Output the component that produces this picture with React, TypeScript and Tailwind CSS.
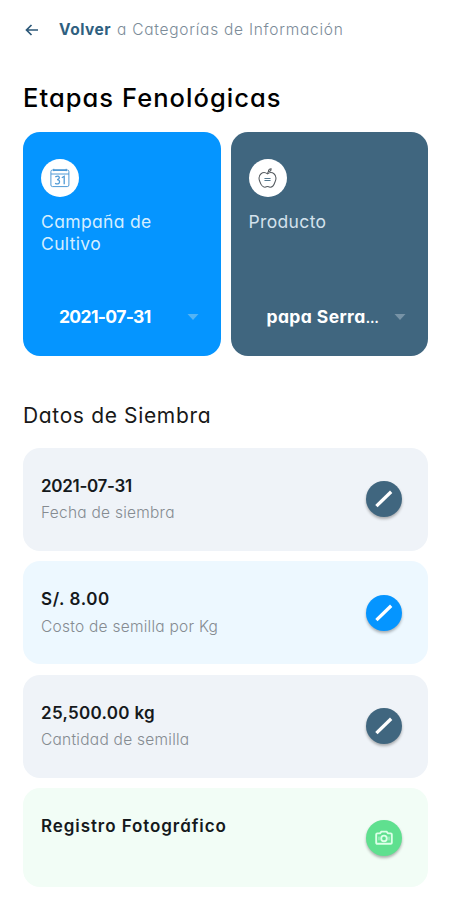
import type { ReactNode } from "react";

const PencilIcon = () => (
  <svg width="20" height="20" viewBox="0 0 20 20" fill="none">
    <path d="M3.6 16L16 3.9" stroke="#fff" strokeWidth="3.3" strokeLinecap="square" />
  </svg>
);

const CameraIcon = () => (
  <svg width="18" height="16" viewBox="0 0 18 16" fill="none" stroke="#dcffe8" strokeWidth="1.9">
    <path d="M2.3 3.4H5L6.4 1.6H11.6L13 3.4H15.7Q16.8 3.4 16.8 4.4V12.7Q16.8 13.8 15.7 13.8H2.3Q1.2 13.8 1.2 12.7V4.4Q1.2 3.4 2.3 3.4Z" />
    <circle cx="9" cy="8.4" r="2.8" />
    <path d="M14 6.6V10.4M4 6.6V10.4" strokeWidth="0.8" />
  </svg>
);

const CalendarIcon = () => (
  <svg width="20" height="20" viewBox="0 0 20 20" fill="none" stroke="#4f9ad6" strokeWidth="1">
    <rect x="0.9" y="2" width="18" height="16.6" rx="1.6" />
    <path d="M1 6H19M3.8 0.8V3.2M16.2 0.8V3.2" />
    <path d="M3 2.2H17" strokeWidth="1.6" />
    <path d="M5.3 8.9Q8.8 7 9.3 9.4Q9.4 11.3 7.1 11.6Q9.8 11.8 9.5 14.2Q8.9 17 5.1 15.3" strokeWidth="1.3" />
    <path d="M11.8 9.8L14.2 8.3V16.2" strokeWidth="1.3" />
  </svg>
);

const AppleIcon = () => (
  <svg width="19" height="21" viewBox="0 0 20 22" fill="none" stroke="#555b60" strokeWidth="1.1">
    <path d="M10 6.2C8 4.6 5.2 4.4 3.2 6C0.8 8 0.8 11.6 2 14.4C3 17.4 5.4 20.4 7.4 20.2C8.6 20.1 9 19.4 10 19.4C11 19.4 11.4 20.1 12.6 20.2C14.8 20.4 17 17.4 18 14.4C19.2 11.6 19.2 8 16.8 6C14.8 4.4 12 4.6 10 6.2Z" />
    <path d="M10 6.2C10.2 4.8 10.4 4 11.3 3.2M11 3.8C10.8 2 12 0.8 13.8 0.8C13.9 2.6 12.8 3.7 11 3.8Z" />
    <path d="M6.8 11H13.2M6.8 13H13.2" stroke="#54788e" strokeWidth="1.1" />
  </svg>
);

const Caret = ({ color }: { color: string }) => (
  <svg width="12" height="6" viewBox="0 0 12 6">
    <path d="M0.5 0H11.5L6 6Z" fill={color} />
  </svg>
);

interface SelectCardProps {
  className: string;
  caret: string;
  icon: ReactNode;
  label: ReactNode;
  value: ReactNode;
}

const SelectCard = ({ className, caret, icon, label, value }: SelectCardProps) => (
  <div className={`flex h-56 flex-1 flex-col rounded-[17px] pr-[22px] pl-[18px] pt-[27px] ${className}`}>
    <div className="flex size-[38px] items-center justify-center rounded-full bg-white">{icon}</div>
    <div className="mt-[14px] text-[17.5px] leading-[22px] tracking-[0.35px]">{label}</div>
    <div className="mt-auto flex items-center justify-between pl-[18px] text-[17.5px] leading-6 font-bold text-white">
      {value}
      <Caret color={caret} />
    </div>
  </div>
);

interface DataRowProps {
  className: string;
  button: string;
  title: ReactNode;
  subtitle?: ReactNode;
  icon: ReactNode;
}

const DataRow = ({ className, button, title, subtitle, icon }: DataRowProps) => (
  <div className={`flex justify-between rounded-[17px] pr-[26px] pl-[18px] ${className}`}>
    <div className="pt-[26.4px]">
      <div className="text-[17px] leading-6 font-semibold text-[#15191c]">{title}</div>
      <div className="mt-[3.5px] text-[15.5px] leading-6 font-light tracking-[0.25px] text-[#858b91]">{subtitle}</div>
    </div>
    <button className={`flex size-9 items-center justify-center self-center rounded-full shadow-[0_2px_3px_rgba(0,0,0,0.3)] ${button}`}>
      {icon}
    </button>
  </div>
);

export default function App() {
  return (
    <main className="h-[900px] w-[450px] overflow-hidden bg-white pr-[22px] pl-[23px] font-[Inter,'Noto_Sans',sans-serif] whitespace-nowrap [font-feature-settings:'cv11']">
      <header className="flex h-[60px] items-center text-[15.5px]">
        <svg width="14" height="14" viewBox="0 0 14 14" fill="none" className="ml-[2px]" stroke="#2c5878" strokeWidth="1.7">
          <path d="M13 7H1.5M6.5 2L1.5 7L6.5 12" />
        </svg>
        <span className="ml-5 font-bold tracking-[0.5px] text-[#2f5f80]">Volver</span>
        <span className="ml-[6px] font-light tracking-[0.74px] text-[#7c8c99]">a Categorías de Información</span>
      </header>

      <h1 className="mt-5 text-[25.5px] leading-9 font-medium tracking-[1.05px] text-black">Etapas Fenológicas</h1>

      <section className="mt-4 flex gap-[10px]">
        <SelectCard
          className="bg-[#0595ff] pb-[27px] text-[#d5eeff]"
          caret="#54b4f5"
          icon={<CalendarIcon />}
          label={<>Campaña de<br />Cultivo</>}
          value={<span className="tracking-[-0.65px]">2021-07-31</span>}
        />
        <SelectCard
          className="bg-[#40667f] pb-[26px] text-[#d3e1ec]"
          caret="#7793a6"
          icon={<AppleIcon />}
          label="Producto"
          value={<span className="pt-px tracking-[0.4px]">papa Serra<span className="text-[13px]">…</span></span>}
        />
      </section>

      <h2 className="mt-[44px] text-[21px] leading-8 tracking-[0.65px] text-[#181818]">Datos de Siembra</h2>

      <section className="mt-[15.5px] flex flex-col gap-[10.5px]">
        <DataRow
          className="h-[103px] bg-[#eff3f8]"
          button="bg-[#40667f]"
          title={<span className="tracking-[-0.3px]">2021-07-31</span>}
          subtitle="Fecha de siembra"
          icon={<PencilIcon />}
        />
        <DataRow
          className="h-[103px] bg-[#edf8ff]"
          button="bg-[#0595ff]"
          title={<span className="tracking-[0.6px]">S/. 8.00</span>}
          subtitle="Costo de semilla por Kg"
          icon={<PencilIcon />}
        />
        <DataRow
          className="h-[103px] bg-[#eff3f8]"
          button="bg-[#40667f]"
          title={<span className="tracking-[0.3px]">25,500.00 kg</span>}
          subtitle="Cantidad de semilla"
          icon={<PencilIcon />}
        />
        <DataRow
          className="h-[99px] bg-[#f2fdf6]"
          button="bg-[#5fe08f]"
          title={<span className="tracking-[0.92px]">Registro Fotográfico</span>}
          icon={<CameraIcon />}
        />
      </section>
    </main>
  );
}
